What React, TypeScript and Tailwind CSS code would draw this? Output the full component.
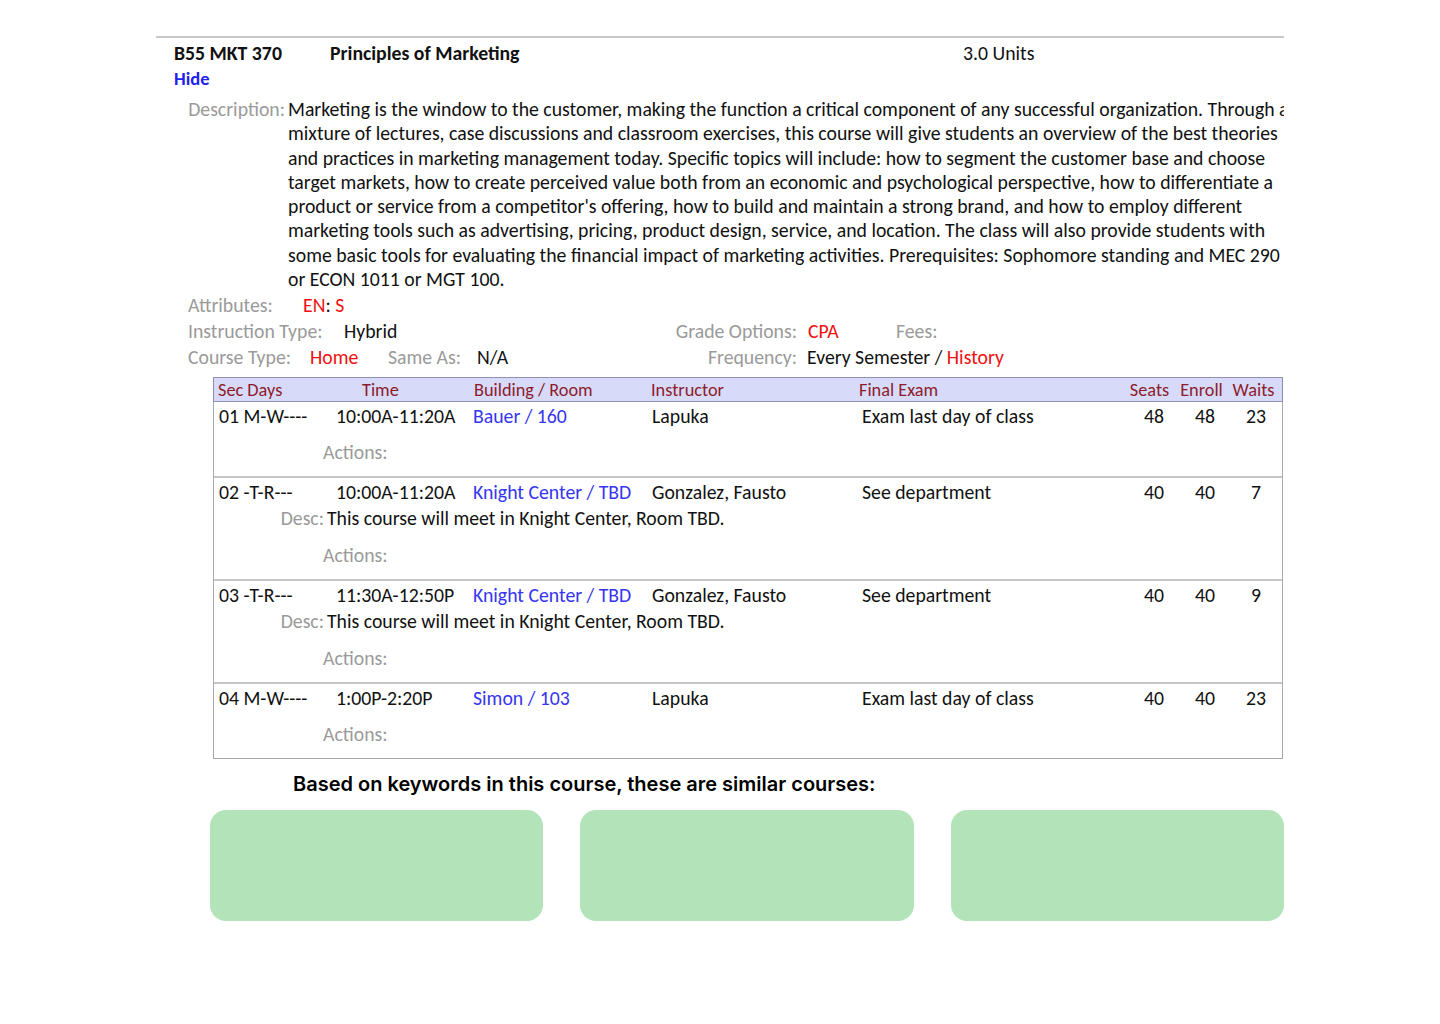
import React from 'react';

const descLines = [
  'Marketing is the window to the customer, making the function a critical component of any successful organization. Through a',
  'mixture of lectures, case discussions and classroom exercises, this course will give students an overview of the best theories',
  'and practices in marketing management today. Specific topics will include: how to segment the customer base and choose',
  'target markets, how to create perceived value both from an economic and psychological perspective, how to differentiate a',
  "product or service from a competitor's offering, how to build and maintain a strong brand, and how to employ different",
  'marketing tools such as advertising, pricing, product design, service, and location. The class will also provide students with',
  'some basic tools for evaluating the financial impact of marketing activities. Prerequisites: Sophomore standing and MEC 290',
  'or ECON 1011 or MGT 100.',
];

type Section = {
  sec: string;
  time: string;
  room: string;
  instructor: string;
  exam: string;
  seats: string;
  enroll: string;
  waits: string;
  desc?: string;
};

const sections: Section[] = [
  { sec: '01 M-W----', time: '10:00A-11:20A', room: 'Bauer / 160', instructor: 'Lapuka', exam: 'Exam last day of class', seats: '48', enroll: '48', waits: '23' },
  { sec: '02 -T-R---', time: '10:00A-11:20A', room: 'Knight Center / TBD', instructor: 'Gonzalez, Fausto', exam: 'See department', seats: '40', enroll: '40', waits: '7', desc: 'This course will meet in Knight Center, Room TBD.' },
  { sec: '03 -T-R---', time: '11:30A-12:50P', room: 'Knight Center / TBD', instructor: 'Gonzalez, Fausto', exam: 'See department', seats: '40', enroll: '40', waits: '9', desc: 'This course will meet in Knight Center, Room TBD.' },
  { sec: '04 M-W----', time: '1:00P-2:20P', room: 'Simon / 103', instructor: 'Lapuka', exam: 'Exam last day of class', seats: '40', enroll: '40', waits: '23' },
];

const cols = 'grid grid-cols-[116px_140px_178px_208px_272px_52px_50px_52px]';

function SectionRow({ s }: { s: Section }) {
  return (
    <div className="border-t-2 border-[#c6c6c6] pt-[2px] pb-[12px] first:border-t-0">
      <div className={`${cols} leading-[24px] text-[#111]`}>
        <span className="pl-[5px] whitespace-pre">{s.sec}</span>
        <span className="pl-[6px]">{s.time}</span>
        <span className="pl-[3px] text-[#3535f0]">{s.room}</span>
        <span className="pl-[4px]">{s.instructor}</span>
        <span className="pl-[6px]">{s.exam}</span>
        <span className="text-center">{s.seats}</span>
        <span className="text-center">{s.enroll}</span>
        <span className="text-center">{s.waits}</span>
      </div>
      {s.desc && (
        <div className="mt-[2px] flex leading-[24px]">
          <span className="w-[113px] pr-[3px] text-right text-[#9a9a9a]">Desc:</span>
          <span className="text-[#111]">{s.desc}</span>
        </div>
      )}
      <div className={`${s.desc ? 'mt-[13px]' : 'mt-[12px]'} pl-[109px] leading-[24px] text-[#9a9a9a]`}>Actions:</div>
    </div>
  );
}

export default function App() {
  return (
    <div className="w-[1440px] h-[1024px] bg-white font-['Carlito','Open_Sans',sans-serif] text-[19.75px] text-[#111] overflow-hidden">
      <div className="ml-[156px] w-[1128px] pt-[36px]">
        {/* course header */}
        <div className="border-t-2 border-[#c8c8c8]" />
        <div className="flex pl-[18px] pt-[1px] leading-[28px] font-bold text-[#111]">
          <span className="w-[156px]">B55 MKT 370</span>
          <span className="w-[633px]">Principles of Marketing</span>
          <span className="font-normal">3.0 Units</span>
        </div>
        <div className="pl-[18px] text-[18.5px] leading-[23px] font-bold text-[#2222ee]">Hide</div>

        {/* description */}
        <div className="mt-[7px] flex">
          <span className="w-[132px] shrink-0 pr-[3px] text-right leading-[24.3px] text-[#9a9a9a]">Description:</span>
          <div className="w-[996px] overflow-hidden leading-[24.3px]">
            {descLines.map((l) => (
              <div key={l} className="whitespace-nowrap">{l}</div>
            ))}
          </div>
        </div>

        {/* attributes */}
        <div className="mt-[1px] pl-[32px] leading-[26px]">
          <div className="flex">
            <span className="w-[115px] text-[#9a9a9a]">Attributes:</span>
            <span>
              <span className="text-[#f01010]">EN</span>: <span className="text-[#f01010]">S</span>
            </span>
          </div>
          <div className="flex">
            <div className="flex w-[472px]">
              <span className="w-[156px] text-[#9a9a9a]">Instruction Type:</span>
              <span>Hybrid</span>
            </div>
            <span className="w-[148px] pr-[11px] text-right text-[#9a9a9a]">Grade Options:</span>
            <span className="w-[88px] text-[#f01010]">CPA</span>
            <span className="text-[#9a9a9a]">Fees:</span>
          </div>
          <div className="flex">
            <div className="flex w-[472px]">
              <span className="w-[122px] text-[#9a9a9a]">Course Type:</span>
              <span className="w-[78px] text-[#f01010]">Home</span>
              <span className="w-[89px] text-[#9a9a9a]">Same As:</span>
              <span>N/A</span>
            </div>
            <span className="w-[147px] pr-[10px] text-right text-[#9a9a9a]">Frequency:</span>
            <span>
              Every Semester / <span className="text-[#f01010]">History</span>
            </span>
          </div>
        </div>

        {/* sections table */}
        <div className="mt-[7px] ml-[57px] w-[1070px]">
          <div className={`${cols} border border-[#9090b0] bg-[#d7daf9] pt-[1px] text-[18.3px] leading-[22px] text-[#8c1c2c]`}>
            <span className="pl-[4px]">Sec Days</span>
            <span className="pl-[32px]">Time</span>
            <span className="pl-[4px]">Building / Room</span>
            <span className="pl-[3px]">Instructor</span>
            <span className="pl-[3px]">Final Exam</span>
            <span className="pr-[9px] text-center">Seats</span>
            <span className="pr-[7px] text-center">Enroll</span>
            <span className="pr-[5px] text-center">Waits</span>
          </div>
          <div className="border border-t-0 border-[#a8a8a8]">
            {sections.map((s) => (
              <SectionRow key={s.sec} s={s} />
            ))}
          </div>
        </div>

        {/* similar courses */}
        <div className="mt-[11px] pl-[137px] font-['Inter',sans-serif] text-[20px] font-semibold leading-[28px] text-black">
          Based on keywords in this course, these are similar courses:
        </div>
        <div className="mt-[12px] ml-[54px] grid grid-cols-3 gap-[37px]">
          <div className="h-[111px] rounded-[16px] bg-[#b3e3b9]" />
          <div className="h-[111px] rounded-[16px] bg-[#b3e3b9]" />
          <div className="h-[111px] rounded-[16px] bg-[#b3e3b9]" />
        </div>
      </div>
    </div>
  );
}
